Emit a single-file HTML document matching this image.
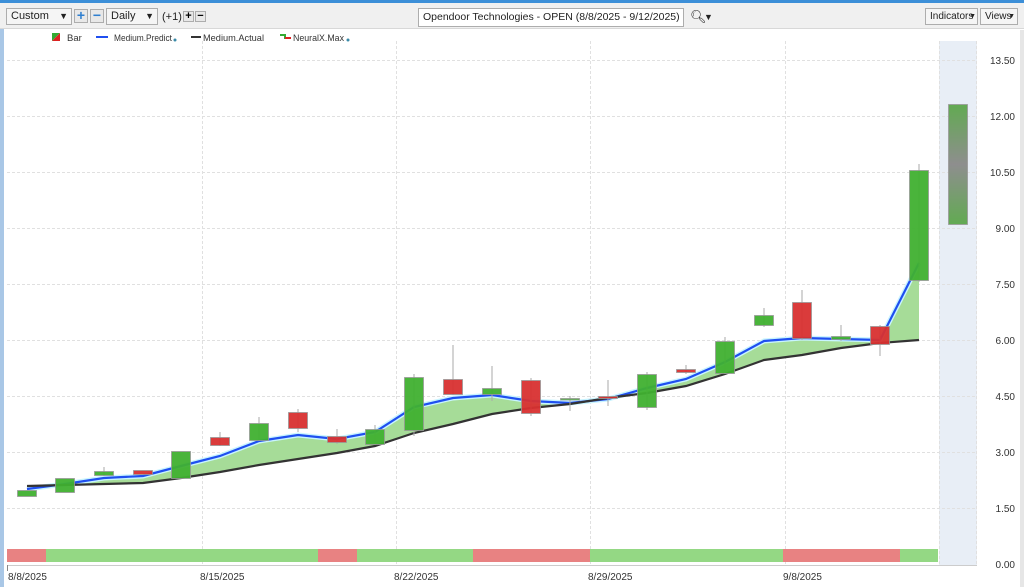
<!DOCTYPE html>
<html><head><meta charset="utf-8"><style>
*{margin:0;padding:0;box-sizing:border-box}
body{width:1024px;height:587px;overflow:hidden;background:#fff;font-family:"Liberation Sans",sans-serif;position:relative}
.tb{position:absolute;left:0;top:0;width:1024px;height:29px;background:#f0f0f0;border-top:3px solid #3c8fd8;border-bottom:1px solid #d8d8d8}
.bx{position:absolute;top:8px;height:17px;border:1px solid #adadad;background:#f5f5f5;font-size:11px;line-height:15px;padding-left:4px;color:#222;white-space:nowrap;overflow:hidden}
.sq{position:absolute;top:9px;width:14px;height:14px;border:1px solid #adadad;background:#e8e8e8;color:#2f7fd0;font-weight:bold;font-size:14px;line-height:11px;text-align:center}
.t{position:absolute;font-size:11px;color:#222;white-space:nowrap}
</style></head><body>
<div style="position:absolute;left:0;top:0;width:4px;height:587px;background:#a9c7e6"></div>
<div class="tb"></div>
<div class="bx" style="left:6px;width:66px">Custom<span style="position:absolute;right:3px;top:0;font-size:9px">▼</span></div>
<div class="sq" style="left:74px">+</div>
<div class="sq" style="left:90px">−</div>
<div class="bx" style="left:106px;width:52px">Daily<span style="position:absolute;right:3px;top:0;font-size:9px">▼</span></div>
<div class="t" style="left:162px;top:11px">(+1)</div>
<div class="sq" style="left:183px;width:11px;height:11px;top:11px;color:#000;font-size:11px;line-height:9px">+</div>
<div class="sq" style="left:195px;width:11px;height:11px;top:11px;color:#000;font-size:11px;line-height:9px">−</div>
<div class="bx" style="left:418px;top:8px;width:266px;height:19px;background:#fff;font-size:10.5px;line-height:17px;padding-left:4px">Opendoor Technologies - OPEN (8/8/2025 - 9/12/2025)</div>
<div class="t" style="left:690px;top:9px;font-size:13px">&#x1F50D;&#xFE0E;</div>
<div class="t" style="left:704px;top:12px;font-size:9px">▼</div>
<div class="bx" style="left:925px;width:53px;padding-left:4px;font-size:10px">Indicators<span style="position:absolute;right:1px;top:0;font-size:7px">▼</span></div>
<div class="bx" style="left:980px;width:38px;padding-left:4px;font-size:10px">Views <span style="position:absolute;right:2px;top:0;font-size:7px">▼</span></div>
<div style="position:absolute;left:1020px;top:30px;width:4px;height:557px;background:#e6e6e6"></div>
<svg width="1024" height="587" style="position:absolute;left:0;top:0">
<rect x="939" y="41" width="38" height="524" fill="#e8eef6"/>
<g stroke="#e0e0e0" stroke-dasharray="3,2" stroke-width="1">
<line x1="7" x2="977" y1="60.5" y2="60.5"/><line x1="7" x2="977" y1="116.5" y2="116.5"/><line x1="7" x2="977" y1="172.5" y2="172.5"/><line x1="7" x2="977" y1="228.5" y2="228.5"/><line x1="7" x2="977" y1="284.5" y2="284.5"/><line x1="7" x2="977" y1="340.5" y2="340.5"/><line x1="7" x2="977" y1="396.5" y2="396.5"/><line x1="7" x2="977" y1="452.5" y2="452.5"/><line x1="7" x2="977" y1="508.5" y2="508.5"/>
<line x1="202.5" x2="202.5" y1="41" y2="565"/><line x1="396.5" x2="396.5" y1="41" y2="565"/><line x1="590.5" x2="590.5" y1="41" y2="565"/><line x1="785.5" x2="785.5" y1="41" y2="565"/><line x1="939.5" x2="939.5" y1="41" y2="565"/><line x1="976.5" x2="976.5" y1="41" y2="565"/>
</g>
<polygon fill="#a6dc98" points="27,489 65,484 104,478 143,476 181,466 220,456 259,441 298,435 337,439 375,432 414,407 453,398 492,395 531,401 570,403 608,399 647,388 686,379 725,362 764,341 802,338 841,339 880,340 919,263 919,340 880,343 841,348 802,355 764,360 725,374 686,386 647,393 608,398 570,404 531,408 492,414 453,424 414,433 375,446 337,453 298,459 259,465 220,472 181,478 143,483 104,484 65,485 27,486"/>
<polyline fill="none" stroke="#c8f4ff" stroke-width="5" points="27,489 65,484 104,478 143,476 181,466 220,456 259,441 298,435 337,439 375,432 414,407 453,398 492,395 531,401 570,403 608,399 647,388 686,379 725,362 764,341 802,338 841,339 880,340 919,263"/>
<polyline fill="none" stroke="#1f4ff0" stroke-width="2.2" points="27,489 65,484 104,478 143,476 181,466 220,456 259,441 298,435 337,439 375,432 414,407 453,398 492,395 531,401 570,403 608,399 647,388 686,379 725,362 764,341 802,338 841,339 880,340 919,263"/>
<polyline fill="none" stroke="#333" stroke-width="2.2" points="27,486 65,485 104,484 143,483 181,478 220,472 259,465 298,459 337,453 375,446 414,433 453,424 492,414 531,408 570,404 608,398 647,393 686,386 725,374 764,360 802,355 841,348 880,343 919,340"/>
<g stroke="#aaa" stroke-width="1">
<line x1="104" x2="104" y1="467" y2="476"/><line x1="220" x2="220" y1="432" y2="446"/><line x1="259" x2="259" y1="417" y2="441"/><line x1="298" x2="298" y1="409" y2="432"/><line x1="337" x2="337" y1="429" y2="444"/><line x1="375" x2="375" y1="425" y2="445"/><line x1="414" x2="414" y1="374" y2="436"/><line x1="453" x2="453" y1="345" y2="395"/><line x1="492" x2="492" y1="366" y2="401"/><line x1="531" x2="531" y1="378" y2="416"/><line x1="570" x2="570" y1="396" y2="411"/><line x1="608" x2="608" y1="380" y2="406"/><line x1="647" x2="647" y1="372" y2="410"/><line x1="686" x2="686" y1="365" y2="374"/><line x1="725" x2="725" y1="337" y2="374"/><line x1="764" x2="764" y1="308" y2="327"/><line x1="802" x2="802" y1="290" y2="340"/><line x1="841" x2="841" y1="325" y2="341"/><line x1="880" x2="880" y1="325" y2="356"/><line x1="919" x2="919" y1="164" y2="282"/>
</g>
<g stroke="#999" stroke-width="0.8" fill-opacity="0.95">
<rect x="17.5" y="490.5" width="19" height="6" fill="#40b030"/>
<rect x="55.5" y="478.5" width="19" height="14" fill="#40b030"/>
<rect x="94.5" y="471.5" width="19" height="4" fill="#40b030"/>
<rect x="133.5" y="470.5" width="19" height="4" fill="#d83030"/>
<rect x="171.5" y="451.5" width="19" height="27" fill="#40b030"/>
<rect x="210.5" y="437.5" width="19" height="8" fill="#d83030"/>
<rect x="249.5" y="423.5" width="19" height="17" fill="#40b030"/>
<rect x="288.5" y="412.5" width="19" height="16" fill="#d83030"/>
<rect x="327.5" y="436.5" width="19" height="6" fill="#d83030"/>
<rect x="365.5" y="429.5" width="19" height="15" fill="#40b030"/>
<rect x="404.5" y="377.5" width="19" height="53" fill="#40b030"/>
<rect x="443.5" y="379.5" width="19" height="15" fill="#d83030"/>
<rect x="482.5" y="388.5" width="19" height="6" fill="#40b030"/>
<rect x="521.5" y="380.5" width="19" height="33" fill="#d83030"/>
<rect x="560.5" y="398.5" width="19" height="1.5" fill="#40b030"/>
<rect x="598.5" y="396.5" width="19" height="2" fill="#d83030"/>
<rect x="637.5" y="374.5" width="19" height="33" fill="#40b030"/>
<rect x="676.5" y="369.5" width="19" height="3" fill="#d83030"/>
<rect x="715.5" y="341.5" width="19" height="32" fill="#40b030"/>
<rect x="754.5" y="315.5" width="19" height="10" fill="#40b030"/>
<rect x="792.5" y="302.5" width="19" height="36" fill="#d83030"/>
<rect x="831.5" y="336.5" width="19" height="3" fill="#40b030"/>
<rect x="870.5" y="326.5" width="19" height="18" fill="#d83030"/>
<rect x="909.5" y="170.5" width="19" height="110" fill="#40b030"/>
</g>
<defs><linearGradient id="g" x1="0" y1="0" x2="0" y2="1"><stop offset="0" stop-color="#62aa52"/><stop offset="0.5" stop-color="#8e8e8e"/><stop offset="1" stop-color="#62aa52"/></linearGradient></defs>
<rect x="948.5" y="104.5" width="19" height="120" fill="url(#g)" stroke="#999" stroke-width="0.8"/>
<g>
<rect x="7" y="549" width="39" height="13" fill="#e88282"/><rect x="46" y="549" width="272" height="13" fill="#94d884"/><rect x="318" y="549" width="39" height="13" fill="#e88282"/><rect x="357" y="549" width="116" height="13" fill="#94d884"/><rect x="473" y="549" width="117" height="13" fill="#e88282"/><rect x="590" y="549" width="193" height="13" fill="#94d884"/><rect x="783" y="549" width="117" height="13" fill="#e88282"/><rect x="900" y="549" width="38" height="13" fill="#94d884"/>
</g>
<line x1="7" x2="977" y1="565.5" y2="565.5" stroke="#ccc"/>
<line x1="7.5" x2="7.5" y1="565" y2="571" stroke="#888"/>
<g font-family="Liberation Sans" font-size="10" fill="#333">
<text x="1015" y="64" text-anchor="end">13.50</text><text x="1015" y="120" text-anchor="end">12.00</text><text x="1015" y="176" text-anchor="end">10.50</text><text x="1015" y="232" text-anchor="end">9.00</text><text x="1015" y="288" text-anchor="end">7.50</text><text x="1015" y="344" text-anchor="end">6.00</text><text x="1015" y="400" text-anchor="end">4.50</text><text x="1015" y="456" text-anchor="end">3.00</text><text x="1015" y="512" text-anchor="end">1.50</text><text x="1015" y="568" text-anchor="end">0.00</text>
<text x="8" y="580">8/8/2025</text><text x="200" y="580">8/15/2025</text><text x="394" y="580">8/22/2025</text><text x="588" y="580">8/29/2025</text><text x="783" y="580">9/8/2025</text>
</g>
<g font-family="Liberation Sans" font-size="9.5" fill="#333">
<text x="67" y="41">Bar</text><text x="114" y="41" textLength="58" lengthAdjust="spacingAndGlyphs">Medium.Predict</text><text x="203" y="41" textLength="61" lengthAdjust="spacingAndGlyphs">Medium.Actual</text><text x="293" y="41" textLength="51" lengthAdjust="spacingAndGlyphs">NeuralX.Max</text>
</g>
<polygon points="52,33 60,33 52,41" fill="#3a3"/><polygon points="60,33 60,41 52,41" fill="#d22"/>
<line x1="96" x2="108" y1="37" y2="37" stroke="#1f4ff0" stroke-width="2"/>
<line x1="191" x2="201" y1="37" y2="37" stroke="#333" stroke-width="2"/>
<polyline points="280,35 285,35 285,38 291,38" fill="none" stroke="#3a3" stroke-width="2"/><line x1="285" x2="291" y1="38" y2="38" stroke="#d22" stroke-width="2"/>
<circle cx="175" cy="40" r="1.5" fill="#3a8aa8"/><circle cx="348" cy="40" r="1.5" fill="#3a8aa8"/>
</svg>
</body></html>
